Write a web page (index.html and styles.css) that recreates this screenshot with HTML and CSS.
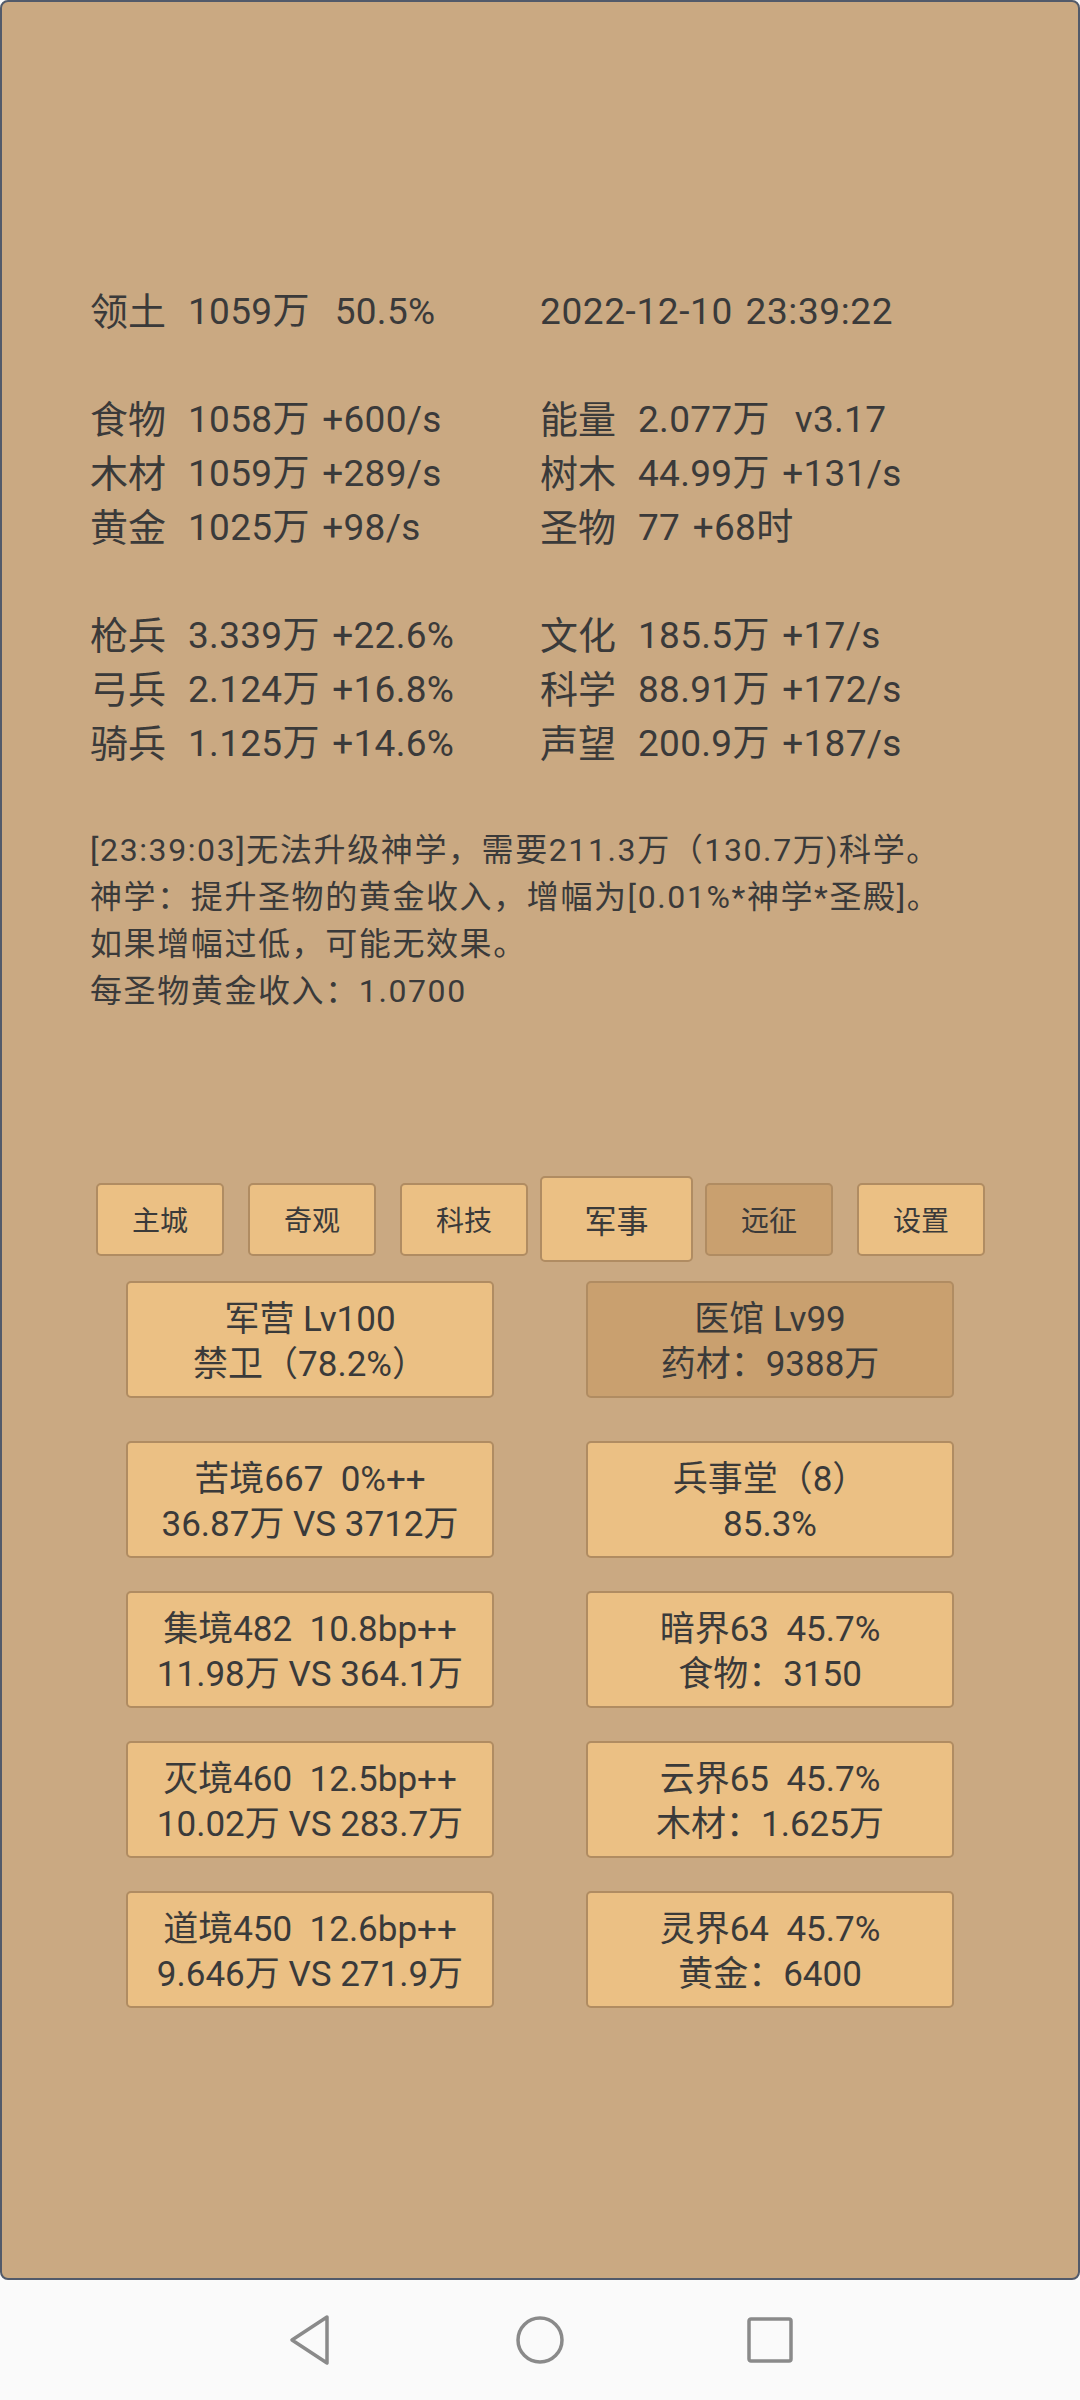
FILE: index.html
```html
<!DOCTYPE html>
<html lang="zh-CN">
<head>
    <meta charset="UTF-8">
    <meta name="viewport" content="width=device-width, initial-scale=1.0">
    <title>领土</title>
    <link rel="stylesheet" href="styles.css">
</head>
<body>

<div class="screen">
    <div class="panel">

        <!-- Resource stats -->
        <div class="stats">
            <div><span class="k">领土</span>1059万  50.5%</div><div class="date">2022-12-10 23:39:22</div>
            <div class="blank"></div>
            <div><span class="k">食物</span>1058万 +600/s</div><div><span class="k">能量</span>2.077万  v3.17</div>
            <div><span class="k">木材</span>1059万 +289/s</div><div><span class="k">树木</span>44.99万 +131/s</div>
            <div><span class="k">黄金</span>1025万 +98/s</div><div><span class="k">圣物</span>77 +68时</div>
            <div class="blank"></div>
            <div><span class="k">枪兵</span>3.339万 +22.6%</div><div><span class="k">文化</span>185.5万 +17/s</div>
            <div><span class="k">弓兵</span>2.124万 +16.8%</div><div><span class="k">科学</span>88.91万 +172/s</div>
            <div><span class="k">骑兵</span>1.125万 +14.6%</div><div><span class="k">声望</span>200.9万 +187/s</div>
        </div>

        <!-- Message log -->
        <div class="log">
            <p>[23:39:03]无法升级神学，需要211.3万（130.7万)科学。</p>
            <p>神学：提升圣物的黄金收入，增幅为[0.01%*神学*圣殿]。</p>
            <p>如果增幅过低，可能无效果。</p>
            <p>每圣物黄金收入：1.0700</p>
        </div>

        <!-- Tabs -->
        <div class="tabs">
            <div class="tab">主城</div>
            <div class="tab">奇观</div>
            <div class="tab">科技</div>
            <div class="tab active">军事</div>
            <div class="tab dim">远征</div>
            <div class="tab">设置</div>
        </div>

        <!-- Buildings -->
        <div class="cards">
            <div class="card first"><span>军营 Lv100</span><span>禁卫（78.2%）</span></div>
            <div class="card first dim"><span>医馆 Lv99</span><span>药材：9388万</span></div>
            <div class="card"><span>苦境667  0%++</span><span>36.87万 VS 3712万</span></div>
            <div class="card"><span>兵事堂（8）</span><span>85.3%</span></div>
            <div class="card"><span>集境482  10.8bp++</span><span>11.98万 VS 364.1万</span></div>
            <div class="card"><span>暗界63  45.7%</span><span>食物：3150</span></div>
            <div class="card"><span>灭境460  12.5bp++</span><span>10.02万 VS 283.7万</span></div>
            <div class="card"><span>云界65  45.7%</span><span>木材：1.625万</span></div>
            <div class="card"><span>道境450  12.6bp++</span><span>9.646万 VS 271.9万</span></div>
            <div class="card"><span>灵界64  45.7%</span><span>黄金：6400</span></div>
        </div>

    </div>

    <!-- Android navigation bar -->
    <div class="navbar">
        <div class="nav-btn">
            <svg width="44" height="52" viewBox="0 0 44 52">
                <path d="M39 3 L4 26 L39 49 Z" fill="none" stroke="#8a8a8a" stroke-width="3.5" stroke-linejoin="round"/>
            </svg>
        </div>
        <div class="nav-btn">
            <svg width="50" height="50" viewBox="0 0 50 50">
                <circle cx="25" cy="25" r="22" fill="none" stroke="#8a8a8a" stroke-width="3.5"/>
            </svg>
        </div>
        <div class="nav-btn">
            <svg width="46" height="46" viewBox="0 0 46 46">
                <rect x="2" y="2" width="42" height="42" rx="2" fill="none" stroke="#8a8a8a" stroke-width="3.5"/>
            </svg>
        </div>
    </div>
</div>

</body>
</html>
```

FILE: styles.css
```css
body {
    margin: 0;
    font-family: Roboto, "Noto Sans CJK SC", sans-serif;
    color: #3a3a3a;
    background: #fafafa;
}
.screen {
    width: 1080px;
    height: 2400px;
    display: flex;
    flex-direction: column;
}
.panel {
    height: 2280px;
    box-sizing: border-box;
    border: 2px solid #525a6a;
    border-radius: 8px;
    background: #caa982;
    padding-top: 283px;
}
.stats {
    display: grid;
    grid-template-columns: 450px 1fr;
    grid-auto-rows: 54px;
    padding-left: 88px;
    font-size: 37px;
    line-height: 54px;
    letter-spacing: 0.3px;
    word-spacing: 3px;
    white-space: pre;
}
.stats .k {
    display: inline-block;
    width: 98px;
    font-size: 38px;
    line-height: 54px;
    vertical-align: top;
    letter-spacing: 0;
}
.stats .date {
    letter-spacing: 0.6px;
}
.stats .blank {
    grid-column: span 2;
}
.log {
    margin-top: 56px;
    padding-left: 88px;
    font-size: 32px;
    line-height: 47px;
    letter-spacing: 1.6px;
}
.log p {
    margin: 0;
}
.tabs {
    display: flex;
    align-items: center;
    gap: 24px;
    margin-top: 161px;
    padding-left: 94px;
    height: 86px;
}
.tab {
    width: 128px;
    height: 73px;
    box-sizing: border-box;
    border: 2px solid #b08c62;
    border-radius: 5px;
    background: #ebc084;
    font-size: 28px;
    display: flex;
    align-items: center;
    justify-content: center;
}
.tab.active {
    width: 153px;
    height: 86px;
    margin: 0 -12px;
    font-size: 32px;
}
.tab.dim {
    background: #c9a06f;
}
.cards {
    display: grid;
    grid-template-columns: 368px 368px;
    justify-content: center;
    column-gap: 92px;
    row-gap: 33px;
    margin-top: 19px;
}
.card {
    height: 117px;
    box-sizing: border-box;
    padding-top: 4px;
    border: 2px solid #b08c62;
    border-radius: 5px;
    background: #ebc084;
    font-size: 35px;
    line-height: 45px;
    white-space: pre;
    display: flex;
    flex-direction: column;
    align-items: center;
    justify-content: center;
}
.card.first {
    margin-bottom: 10px;
}
.card.dim {
    background: #c9a06f;
}
.navbar {
    height: 120px;
    display: flex;
    align-items: center;
    justify-content: center;
    gap: 170px;
}
.nav-btn {
    width: 60px;
    display: flex;
    justify-content: center;
}
```
